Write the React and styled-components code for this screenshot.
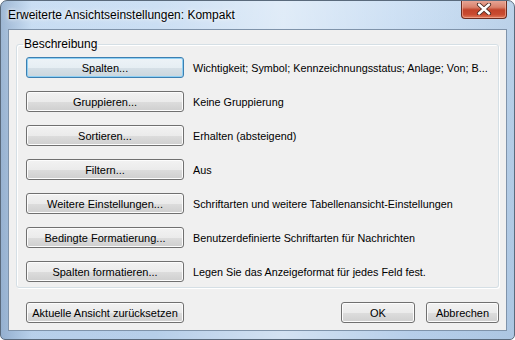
import React from 'react'
import styled, { createGlobalStyle } from 'styled-components'

const rows = [
  { label: 'Spalten...', text: 'Wichtigkeit; Symbol; Kennzeichnungsstatus; Anlage; Von; B...', primary: true },
  { label: 'Gruppieren...', text: 'Keine Gruppierung' },
  { label: 'Sortieren...', text: 'Erhalten (absteigend)' },
  { label: 'Filtern...', text: 'Aus' },
  { label: 'Weitere Einstellungen...', text: 'Schriftarten und weitere Tabellenansicht-Einstellungen' },
  { label: 'Bedingte Formatierung...', text: 'Benutzerdefinierte Schriftarten für Nachrichten' },
  { label: 'Spalten formatieren...', text: 'Legen Sie das Anzeigeformat für jedes Feld fest.' },
]

function App() {
  return (
    <>
      <GlobalStyle />
      <Window>
        <TitleBar>
          <Title>Erweiterte Ansichtseinstellungen: Kompakt</Title>
          <CloseButton>
            <svg width="16" height="12" viewBox="0 0 16 12">
              <path d="M3 1.5 L13 10.5 M13 1.5 L3 10.5" stroke="#4a2a22" strokeWidth="4.2" strokeLinecap="round" />
              <path d="M3 1.5 L13 10.5 M13 1.5 L3 10.5" stroke="#ffffff" strokeWidth="2.4" strokeLinecap="round" />
            </svg>
          </CloseButton>
        </TitleBar>
        <Client>
          <GroupBox>
            <Legend>Beschreibung</Legend>
            {rows.map((r) => (
              <Row key={r.label}>
                <Button $primary={r.primary} $width="158px">{r.label}</Button>
                <Description>{r.text}</Description>
              </Row>
            ))}
          </GroupBox>
          <Footer>
            <Button $width="158px">Aktuelle Ansicht zurücksetzen</Button>
            <Spacer />
            <Button $width="74px">OK</Button>
            <Button $width="73px">Abbrechen</Button>
          </Footer>
        </Client>
      </Window>
    </>
  )
}

const GlobalStyle = createGlobalStyle`
  html, body {
    margin: 0;
    padding: 0;
    background: #ffffff;
  }
  body {
    font-family: "Liberation Sans", Arial, sans-serif;
    font-size: 11px;
  }
`

const Window = styled.div`
  width: 515px;
  height: 340px;
  box-sizing: border-box;
  display: flex;
  flex-direction: column;
  padding: 0 7px 8px 7px;
  border: 1px solid #5a6a7c;
  border-radius: 7px 7px 5px 5px;
  background:
    linear-gradient(90deg, rgba(120,150,185,0.55) 0%, rgba(190,215,240,0.2) 6%, rgba(255,255,255,0) 30%, rgba(255,255,255,0.4) 55%, rgba(255,255,255,0) 80%, rgba(150,180,210,0.3) 100%),
    linear-gradient(180deg, #cde0f4 0%, #c0d6ee 40%, #b6cee9 100%);
  overflow: hidden;
`

const TitleBar = styled.div`
  height: 28px;
  display: flex;
  align-items: flex-start;
  flex-shrink: 0;
`

const Title = styled.div`
  font-size: 12px;
  color: #000;
  margin-top: 7px;
  text-shadow: 0 0 6px rgba(255,255,255,0.9), 0 0 3px rgba(255,255,255,0.9);
`

const CloseButton = styled.div`
  margin-left: auto;
  margin-top: -1px;
  width: 44px;
  height: 18px;
  display: flex;
  align-items: center;
  justify-content: center;
  border: 1px solid #6b2c20;
  border-top: none;
  border-radius: 0 0 4px 4px;
  background: linear-gradient(180deg, #e9a99a 0%, #d9826c 40%, #c2432a 55%, #c94b30 80%, #e07a5c 100%);
  box-shadow: inset 0 0 0 1px rgba(255,200,180,0.5);
`

const Client = styled.div`
  flex: 1;
  display: flex;
  flex-direction: column;
  background: #f0f0f0;
  border: 1px solid #7f93aa;
  padding: 7px;
`

const GroupBox = styled.fieldset`
  margin: 0;
  padding: 6px 9px 5px 9px;
  border: 1px solid #d5dfe5;
  border-radius: 3px;
  box-shadow: inset 1px 1px 0 #ffffff, 1px 1px 0 #ffffff;
  display: flex;
  flex-direction: column;
  gap: 13px;
`

const Legend = styled.legend`
  font-size: 12px;
  line-height: 14px;
  padding: 0 1px;
  margin-left: -3px;
  color: #000;
`

const Row = styled.div`
  display: flex;
  align-items: center;
  gap: 9px;
`

const Button = styled.div`
  width: ${(p) => p.$width};
  height: 21px;
  box-sizing: border-box;
  display: flex;
  align-items: center;
  justify-content: center;
  font-size: 11px;
  white-space: nowrap;
  color: #000;
  border: 1px solid ${(p) => (p.$primary ? '#3c7fb1' : '#707070')};
  border-radius: 3px;
  background: ${(p) =>
    p.$primary
      ? 'linear-gradient(180deg, #edf3f7 0%, #e6eef3 50%, #d6e0e7 51%, #cbd6dd 100%)'
      : 'linear-gradient(180deg, #f2f2f2 0%, #ebebeb 50%, #dddddd 51%, #cfcfcf 100%)'};
  box-shadow: ${(p) => (p.$primary ? 'inset 0 0 0 1px #8fd0f4' : 'inset 0 0 0 1px #fcfcfc')};
  flex-shrink: 0;
`

const Description = styled.div`
  font-size: 10.8px;
  color: #000;
  white-space: nowrap;
`

const Footer = styled.div`
  margin-top: auto;
  display: flex;
  align-items: center;
  gap: 11px;
  padding: 0 0 0 10px;
`

const Spacer = styled.div`
  flex: 1;
`

export default App
